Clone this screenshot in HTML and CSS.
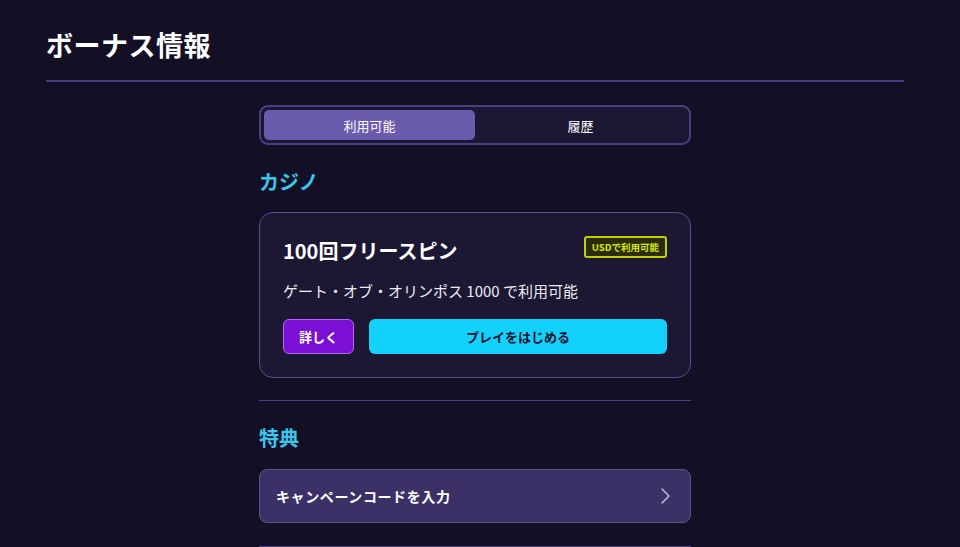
FILE: index.html
```html
<!DOCTYPE html>
<html lang="ja">
<head>
<meta charset="utf-8">
<link rel="stylesheet" href="styles.css">
</head>
<body>
<div class="page">
  <header class="header">
    <h1 class="title">ボーナス情報</h1>
  </header>
  <main class="content">
    <div class="tabs">
      <button class="tab tab-active">利用可能</button>
      <button class="tab">履歴</button>
    </div>

    <h2 class="section-title">カジノ</h2>
    <div class="card">
      <div class="card-top">
        <div class="card-title">100回フリースピン</div>
        <span class="badge">USDで利用可能</span>
      </div>
      <p class="card-desc">ゲート・オブ・オリンポス 1000 で利用可能</p>
      <div class="card-actions">
        <button class="btn btn-details">詳しく</button>
        <button class="btn btn-play">プレイをはじめる</button>
      </div>
    </div>

    <hr class="divider">

    <h2 class="section-title">特典</h2>
    <div class="row-link">
      <span class="row-text">キャンペーンコードを入力</span>
      <svg class="chevron" width="12" height="18" viewBox="0 0 12 18" fill="none">
        <path d="M3 2l7 7-7 7" stroke="#b9b3d6" stroke-width="1.6" stroke-linecap="round" stroke-linejoin="round"/>
      </svg>
    </div>

    <hr class="divider divider-bottom">
  </main>
</div>
</body>
</html>
```

FILE: styles.css
```css
* { box-sizing: border-box; }

html, body {
  margin: 0;
  padding: 0;
  background: #130f25;
  height: 100%;
  overflow: hidden;
}

body {
  font-family: "Noto Sans CJK JP", "Noto Sans", sans-serif;
  color: #ffffff;
}

.page {
  padding: 0 56px 0 46px;
}

.header {
  border-bottom: 2px solid #463b7c;
  height: 82px;
  padding-top: 25px;
}

.title {
  margin: 0;
  font-size: 27px;
  font-weight: 700;
  line-height: 40px;
  letter-spacing: 0.5px;
}

.content {
  width: 432px;
  margin: 0 auto;
  padding-top: 23px;
}

.tabs {
  display: flex;
  height: 40px;
  padding: 3px;
  border: 2px solid #4a3f80;
  border-radius: 9px;
  background: #1c1733;
}

.tab {
  flex: 1;
  border: none;
  background: transparent;
  color: #ffffff;
  font-family: inherit;
  font-size: 13px;
  font-weight: 400;
  border-radius: 5px;
  cursor: pointer;
}

.tab-active {
  background: #6a5bac;
}

.section-title {
  margin: 0;
  font-size: 20px;
  font-weight: 700;
  color: #39c8eb;
  line-height: 30px;
  padding: 22px 0 0 0;
}

.card {
  margin-top: 15px;
  border: 1px solid #5a4c98;
  border-radius: 14px;
  background: #1c1733;
  padding: 21px 23px 23px 23px;
}

.card-top {
  display: flex;
  justify-content: space-between;
  align-items: flex-start;
}

.card-title {
  font-size: 20px;
  font-weight: 700;
  line-height: 34px;
}

.badge {
  margin-top: 2px;
  font-size: 9.5px;
  font-weight: 700;
  color: #d6ea00;
  background: #2c2c0c;
  border: 2px solid #c2d200;
  border-radius: 3px;
  padding: 0 6px;
  line-height: 18px;
}

.card-desc {
  margin: 11px 0 0 0;
  font-size: 15px;
  line-height: 24px;
  color: #ececf2;
}

.card-actions {
  display: flex;
  gap: 15px;
  margin-top: 16px;
}

.btn {
  height: 35px;
  border-radius: 6px;
  font-family: inherit;
  font-size: 13px;
  font-weight: 700;
  cursor: pointer;
}

.btn-details {
  width: 71px;
  background: #7b0fd6;
  border: 1px solid #b167f0;
  color: #ffffff;
}

.btn-play {
  flex: 1;
  background: #12d1fb;
  border: none;
  color: #1a1430;
}

.divider {
  margin: 22px 0 0 0;
  border: none;
  border-top: 1px solid #4c4184;
  height: 0;
}

.divider-bottom {
  margin-top: 23px;
}

.row-link {
  margin-top: 16px;
  height: 54px;
  display: flex;
  align-items: center;
  justify-content: space-between;
  padding: 0 19px 0 16px;
  background: #3c3166;
  border: 1px solid #5d4f95;
  border-radius: 8px;
}

.row-text {
  font-size: 14px;
  font-weight: 700;
  letter-spacing: 0.6px;
}

.chevron {
  display: block;
}
```
